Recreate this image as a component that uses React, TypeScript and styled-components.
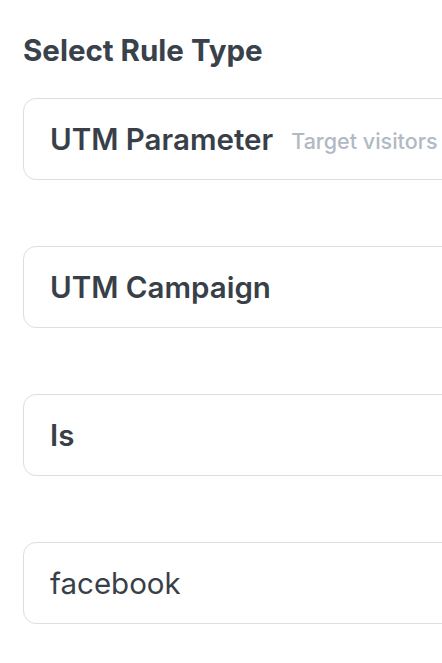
import React from "react";
import styled, { createGlobalStyle } from "styled-components";

const GlobalStyle = createGlobalStyle`
	html, body {
		margin: 0;
		padding: 0;
		background: #ffffff;
		overflow: hidden;
	}
	body {
		font-family: Inter, "Noto Sans", "Liberation Sans", sans-serif;
		color: #393f48;
	}
`;

const Page = styled.div`
	padding: 30px 0 0 23px;
	width: 560px;
`;

const Title = styled.h2`
	margin: 0 0 28px;
	font-size: 29.5px;
	font-weight: 700;
	line-height: 40px;
	color: #39414b;
`;

const Fields = styled.div`
	display: flex;
	flex-direction: column;
	gap: 66px;
`;

const Field = styled.div`
	display: flex;
	align-items: center;
	gap: 18px;
	box-sizing: border-box;
	height: 82px;
	padding: 0 26px;
	border: 1.5px solid #dcdee1;
	border-radius: 13px;
	background: #fff;
	white-space: nowrap;
	overflow: hidden;
`;

const Value = styled.span<{ $bold?: boolean }>`
	font-size: 29.5px;
	font-weight: ${(p) => (p.$bold ? 600 : 400)};
	color: #393f48;
`;

const Hint = styled.span`
	font-size: 21.5px;
	font-weight: 500;
	color: #b1b9c5;
	padding-top: 3px;
`;

export default function App() {
	return (
		<>
			<GlobalStyle />
			<Page>
				<Title>Select Rule Type</Title>
				<Fields>
					<Field>
						<Value $bold>UTM Parameter</Value>
						<Hint>Target visitors</Hint>
					</Field>
					<Field>
						<Value $bold>UTM Campaign</Value>
					</Field>
					<Field>
						<Value $bold>Is</Value>
					</Field>
					<Field>
						<Value>facebook</Value>
					</Field>
				</Fields>
			</Page>
		</>
	);
}
